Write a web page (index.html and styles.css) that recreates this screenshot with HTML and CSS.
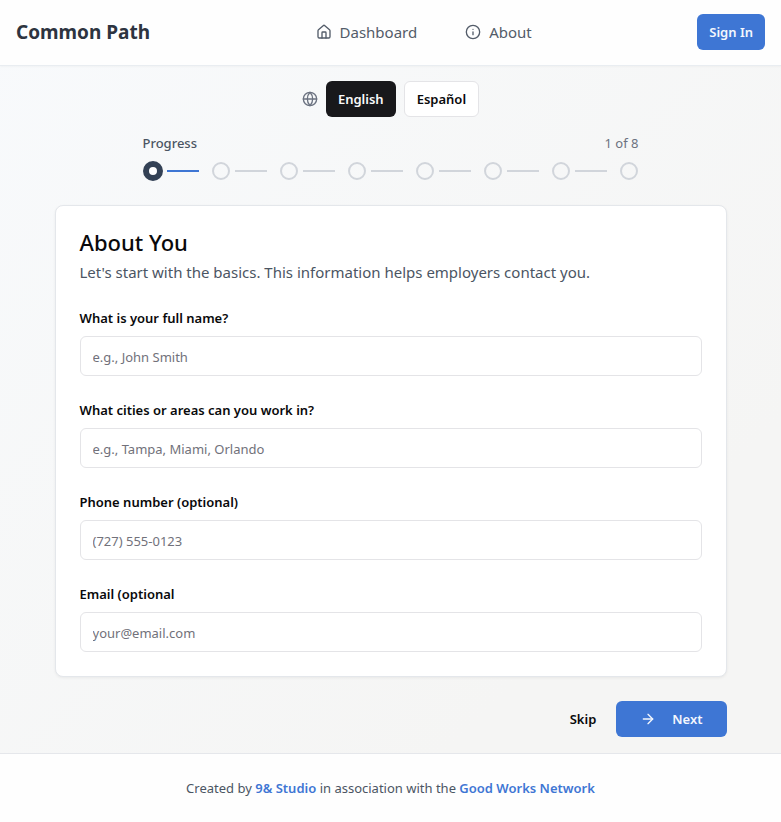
FILE: index.html
```html
<!DOCTYPE html>
<html lang="en">
<head>
    <meta charset="UTF-8">
    <meta name="viewport" content="width=device-width, initial-scale=1.0">
    <title>Common Path</title>
    <link rel="stylesheet" href="styles.css">
</head>
<body>
    <header class="header">
        <a href="#" class="logo">Common Path</a>
        <nav class="nav">
            <a href="#">
                <svg class="icon" viewBox="0 0 24 24"><path d="M15 21v-8a1 1 0 0 0-1-1h-4a1 1 0 0 0-1 1v8"/><path d="M3 10a2 2 0 0 1 .709-1.528l7-5.999a2 2 0 0 1 2.582 0l7 5.999A2 2 0 0 1 21 10v9a2 2 0 0 1-2 2H5a2 2 0 0 1-2-2z"/></svg>
                Dashboard
            </a>
            <a href="#">
                <svg class="icon" viewBox="0 0 24 24"><circle cx="12" cy="12" r="10"/><path d="M12 16v-4"/><path d="M12 8h.01"/></svg>
                About
            </a>
        </nav>
        <button type="button" class="btn btn-primary">Sign In</button>
    </header>

    <main class="main">
        <div class="languages">
            <svg class="icon" viewBox="0 0 24 24"><circle cx="12" cy="12" r="10"/><path d="M12 2a14.5 14.5 0 0 0 0 20 14.5 14.5 0 0 0 0-20"/><path d="M2 12h20"/></svg>
            <button type="button" class="btn btn-dark">English</button>
            <button type="button" class="btn btn-outline">Español</button>
        </div>

        <section class="progress">
            <div class="progress-text">
                <span class="progress-label">Progress</span>
                <span class="progress-count">1 of 8</span>
            </div>
            <ol class="steps">
                <li class="step active"></li>
                <li class="step"></li>
                <li class="step"></li>
                <li class="step"></li>
                <li class="step"></li>
                <li class="step"></li>
                <li class="step"></li>
                <li class="step"></li>
            </ol>
        </section>

        <form class="form" id="profileForm">
            <div class="card">
                <h1>About You</h1>
                <p class="intro">Let's start with the basics. This information helps employers contact you.</p>

                <div class="form-group">
                    <label for="name">What is your full name?</label>
                    <input type="text" id="name" placeholder="e.g., John Smith">
                </div>

                <div class="form-group">
                    <label for="cities">What cities or areas can you work in?</label>
                    <input type="text" id="cities" placeholder="e.g., Tampa, Miami, Orlando">
                </div>

                <div class="form-group">
                    <label for="phone">Phone number (optional)</label>
                    <input type="tel" id="phone" placeholder="(727) 555-0123">
                </div>

                <div class="form-group">
                    <label for="email">Email (optional</label>
                    <input type="email" id="email" placeholder="your@email.com">
                </div>
            </div>

            <div class="actions">
                <button type="button" class="btn btn-ghost">Skip</button>
                <button type="submit" class="btn btn-primary btn-next">
                    <svg class="icon" viewBox="0 0 24 24"><path d="M5 12h14"/><path d="m12 5 7 7-7 7"/></svg>
                    Next
                </button>
            </div>
        </form>
    </main>

    <footer class="footer">
        <p>Created by <a href="#">9&amp; Studio</a> in association with the <a href="#">Good Works Network</a></p>
    </footer>
</body>
</html>
```

FILE: styles.css
```css
*, *::before, *::after {
    margin: 0;
    padding: 0;
    box-sizing: border-box;
    font-family: 'Segoe UI', 'Noto Sans', 'Open Sans', sans-serif;
}

body {
    display: flex;
    flex-direction: column;
    min-height: 100vh;
    background: linear-gradient(135deg, #f8fafc 0%, #f5f5f4 75%, #f5f5f4 100%);
    color: #09090b;
    font-size: 13px;
    line-height: 20px;
}

a {
    text-decoration: none;
}

.icon {
    width: 16px;
    height: 16px;
    flex-shrink: 0;
    fill: none;
    stroke: currentColor;
    stroke-width: 2;
    stroke-linecap: round;
    stroke-linejoin: round;
}

.header {
    display: flex;
    align-items: center;
    justify-content: space-between;
    padding: 14px 16px 15px;
    background: #fefefe;
    border-bottom: 1px solid #e9edf1;
    box-shadow: 0 1px 2px rgba(0, 0, 0, 0.03);
}

.logo {
    color: #2d3440;
    font-size: 19px;
    font-weight: 700;
    line-height: 28px;
}

.nav {
    display: flex;
    gap: 48px;
}

.nav a {
    display: flex;
    align-items: center;
    gap: 8px;
    color: #535c69;
    font-size: 15px;
    line-height: 24px;
}

.btn {
    display: inline-flex;
    align-items: center;
    justify-content: center;
    height: 36px;
    padding: 0 12px;
    border: none;
    border-radius: 6px;
    font-size: 13px;
    font-weight: 600;
    line-height: 20px;
    white-space: nowrap;
    cursor: pointer;
}

.btn-primary {
    background: #3e76d4;
    color: #f4f7fd;
}

.btn-dark {
    background: #18181b;
    color: #fafafa;
}

.btn-outline {
    background: white;
    border: 1px solid #e4e4e7;
    color: #09090b;
}

.btn-ghost {
    background: transparent;
    color: #09090b;
}

.main {
    flex: 1;
    padding: 15px 16px;
}

.languages {
    display: flex;
    align-items: center;
    justify-content: center;
    gap: 8px;
}

.languages .icon {
    color: #6b7280;
}

.progress {
    width: fit-content;
    margin: 16px auto 0;
}

.progress-text {
    display: flex;
    justify-content: space-between;
    margin-bottom: 8px;
}

.progress-label {
    color: #4b5563;
    font-weight: 500;
}

.progress-count {
    color: #6b7280;
}

.steps {
    display: flex;
    list-style: none;
}

.step {
    display: flex;
    align-items: center;
}

/* the dot */
.step::before {
    content: "";
    width: 18px;
    height: 18px;
    margin: 1px;
    border: 2px solid #d1d5db;
    border-radius: 50%;
}

/* the line to the next dot */
.step:not(:last-child)::after {
    content: "";
    width: 32px;
    height: 2px;
    margin: 0 12px 0 4px;
    background: #d1d5db;
}

.step.active::before {
    width: 20px;
    height: 20px;
    margin: 0;
    border: 6px solid #334155;
    background: white;
}

.step.active::after {
    background: #3e76d4;
}

.form {
    max-width: 672px;
    margin: 24px auto 0;
}

.card {
    padding: 24px;
    background: white;
    border: 1px solid #e4e7eb;
    border-radius: 8px;
    box-shadow: 0 1px 3px rgba(0, 0, 0, 0.06);
}

h1 {
    margin-bottom: 6px;
    font-size: 22px;
    font-weight: 500;
    line-height: 24px;
}

.intro {
    color: #4b5563;
    font-size: 15px;
    line-height: 24px;
}

.form-group {
    margin-top: 24px;
}

label {
    display: block;
    margin-bottom: 8px;
    font-weight: 600;
}

input {
    display: block;
    width: 100%;
    height: 40px;
    padding: 2px 12px 0;
    background: white;
    border: 1px solid #e4e4e7;
    border-radius: 6px;
    font-size: 13px;
}

input::placeholder {
    color: #71717a;
    opacity: 1;
}

input:focus {
    outline: none;
    border-color: #3e76d4;
}

.actions {
    display: flex;
    justify-content: flex-end;
    gap: 8px;
    margin-top: 24px;
}

.btn-next {
    gap: 16px;
    padding: 0 24px;
}

.footer {
    padding: 24px 16px;
    background: #fefefe;
    border-top: 1px solid #e5e7eb;
    color: #4b5563;
    text-align: center;
}

.footer a {
    color: #3e76d4;
    font-weight: 600;
}
```
